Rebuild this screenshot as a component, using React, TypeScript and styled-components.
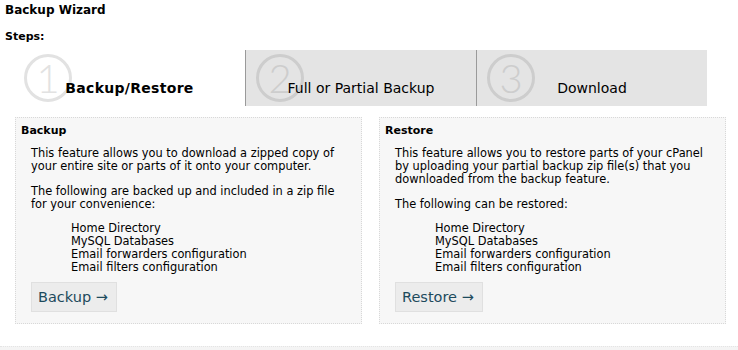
import React from "react";
import styled, { createGlobalStyle } from "styled-components";

const Global = createGlobalStyle`
  html, body { margin: 0; padding: 0; background: #fff; }
  body { font-family: "DejaVu Sans", Verdana, sans-serif; color: #000; }
`;

const Page = styled.div`
  padding: 3px 0 0 5px;
  width: 738px;
  box-sizing: border-box;
`;

const Title = styled.h1`
  margin: 0;
  font-size: 12px;
  line-height: 14px;
  font-weight: bold;
`;

const StepsLabel = styled.h2`
  margin: 13px 0 0 0;
  font-size: 11px;
  line-height: 13px;
  font-weight: bold;
`;

const Tabs = styled.div`
  display: flex;
  margin: 7px 0 0 9px;
  height: 56px;
`;

const Tab = styled.div<{ $active?: boolean; $divider?: boolean }>`
  position: relative;
  width: 231px;
  box-sizing: border-box;
  background: ${(p) => (p.$active ? "#fff" : "#e4e4e4")};
  border-left: ${(p) => (p.$divider ? "1px solid #9a9a9a" : "none")};
  display: flex;
  align-items: flex-end;
  justify-content: center;
  padding-bottom: 9px;
`;

const StepNumber = styled.div<{ $active?: boolean }>`
  position: absolute;
  left: 10px;
  top: 4px;
  width: 42px;
  height: 42px;
  border-radius: 50%;
  border: 3px solid ${(p) => (p.$active ? "#e2e2e2" : "#cdcdcd")};
  color: ${(p) => (p.$active ? "#e2e2e2" : "#cdcdcd")};
  font-family: Lato, "Open Sans", sans-serif;
  font-weight: 300;
  font-size: 40px;
  line-height: 42px;
  text-align: center;
`;

const TabLabel = styled.span<{ $active?: boolean }>`
  position: relative;
  font-size: 14px;
  line-height: 17px;
  font-weight: ${(p) => (p.$active ? "bold" : "normal")};
  letter-spacing: ${(p) => (p.$active ? "0.3px" : "0")};
`;

const Panels = styled.div`
  display: flex;
  gap: 17px;
  margin: 11px 0 0 10px;
`;

const Panel = styled.section`
  width: 347px;
  height: 207px;
  box-sizing: border-box;
  border: 1px dotted #d8d8d8;
  background: #f7f7f7;
  padding: 6px 5px 0 5px;
`;

const PanelTitle = styled.h3`
  margin: 0;
  font-size: 11px;
  line-height: 14px;
  font-weight: bold;
`;

const PanelBody = styled.div`
  padding: 0 12px 0 10px;
  font-size: 11.4px;
  line-height: 13px;
`;

const Para = styled.p<{ $first?: boolean }>`
  margin: ${(p) => (p.$first ? "9px" : "12px")} 0 0 0;
`;

const List = styled.ul`
  list-style: none;
  margin: 11px 0 0 40px;
  padding: 0;
`;

const ActionButton = styled.button`
  margin-top: 8px;
  height: 30px;
  padding: 0 8px 0 6px;
  background: #ececec;
  border: 1px solid #e0e0e0;
  color: #1d4a5c;
  font-family: "DejaVu Sans", Verdana, sans-serif;
  font-size: 14.5px;
  cursor: pointer;
`;

const Footer = styled.div`
  margin-top: 22px;
  margin-left: -5px;
  height: 8px;
  background: #f4f4f4;
  border-top: 1px dotted #e4e4e4;
`;

const items = [
  "Home Directory",
  "MySQL Databases",
  "Email forwarders configuration",
  "Email filters configuration",
];

const steps = [
  { n: "1", label: "Backup/Restore", active: true },
  { n: "2", label: "Full or Partial Backup" },
  { n: "3", label: "Download" },
];

export default function App() {
  return (
    <>
      <Global />
      <Page>
        <Title>Backup Wizard</Title>
        <StepsLabel>Steps:</StepsLabel>
        <Tabs>
          {steps.map((s, i) => (
            <Tab key={s.n} $active={s.active} $divider={i > 0}>
              <StepNumber $active={s.active}>{s.n}</StepNumber>
              <TabLabel $active={s.active}>{s.label}</TabLabel>
            </Tab>
          ))}
        </Tabs>
        <Panels>
          <Panel>
            <PanelTitle>Backup</PanelTitle>
            <PanelBody>
              <Para $first>
                This feature allows you to download a zipped copy of your entire site or parts of it onto your computer.
              </Para>
              <Para>The following are backed up and included in a zip file for your convenience:</Para>
              <List>
                {items.map((t) => (
                  <li key={t}>{t}</li>
                ))}
              </List>
              <ActionButton>Backup →</ActionButton>
            </PanelBody>
          </Panel>
          <Panel>
            <PanelTitle>Restore</PanelTitle>
            <PanelBody>
              <Para $first>
                This feature allows you to restore parts of your cPanel by uploading your partial backup zip file(s) that you downloaded from the backup feature.
              </Para>
              <Para>The following can be restored:</Para>
              <List>
                {items.map((t) => (
                  <li key={t}>{t}</li>
                ))}
              </List>
              <ActionButton>Restore →</ActionButton>
            </PanelBody>
          </Panel>
        </Panels>
        <Footer />
      </Page>
    </>
  );
}
